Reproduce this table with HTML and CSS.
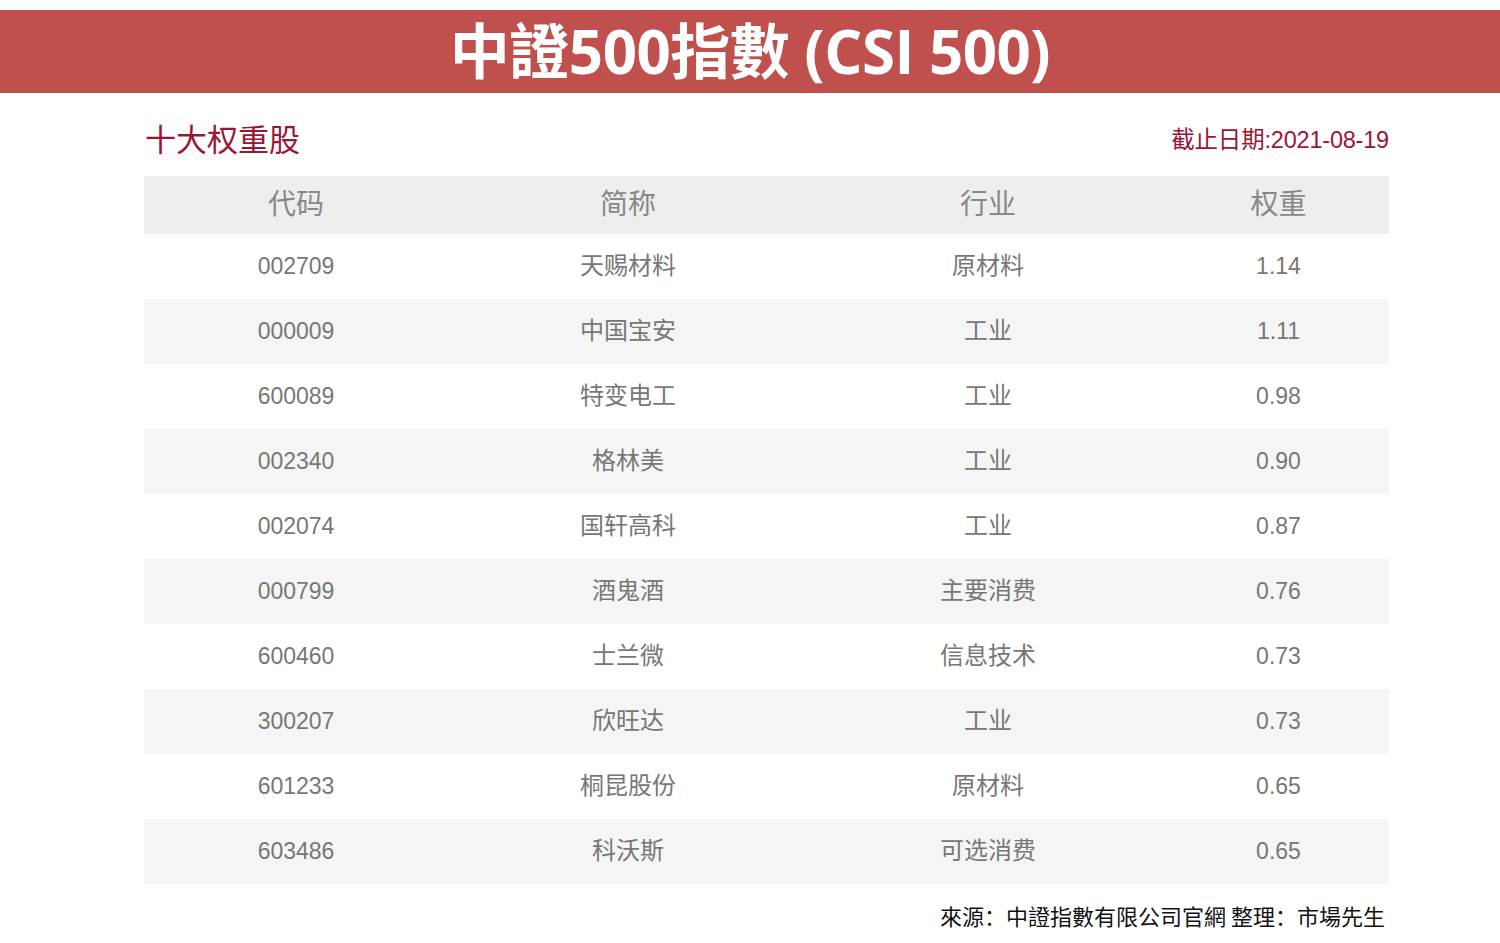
FILE: index.html
```html
<!DOCTYPE html>
<html lang="zh">
<head>
<meta charset="utf-8">
<title>中證500指數 (CSI 500)</title>
<link rel="stylesheet" href="styles.css">
</head>
<body>
<header class="banner"><h1 class="banner-title">中證500指數 (CSI 500)</h1></header>
<main class="content">
  <div class="section-head">
    <h2 class="section-title">十大权重股</h2>
    <div class="date">截止日期:2021-08-19</div>
  </div>
  <table class="holdings">
    <colgroup>
      <col class="c1"><col class="c2"><col class="c3"><col class="c4">
    </colgroup>
    <thead>
      <tr><th>代码</th><th>简称</th><th>行业</th><th>权重</th></tr>
    </thead>
    <tbody>
      <tr><td>002709</td><td>天赐材料</td><td>原材料</td><td>1.14</td></tr>
      <tr><td>000009</td><td>中国宝安</td><td>工业</td><td>1.11</td></tr>
      <tr><td>600089</td><td>特变电工</td><td>工业</td><td>0.98</td></tr>
      <tr><td>002340</td><td>格林美</td><td>工业</td><td>0.90</td></tr>
      <tr><td>002074</td><td>国轩高科</td><td>工业</td><td>0.87</td></tr>
      <tr><td>000799</td><td>酒鬼酒</td><td>主要消费</td><td>0.76</td></tr>
      <tr><td>600460</td><td>士兰微</td><td>信息技术</td><td>0.73</td></tr>
      <tr><td>300207</td><td>欣旺达</td><td>工业</td><td>0.73</td></tr>
      <tr><td>601233</td><td>桐昆股份</td><td>原材料</td><td>0.65</td></tr>
      <tr><td>603486</td><td>科沃斯</td><td>可选消费</td><td>0.65</td></tr>
    </tbody>
  </table>
  <p class="source">來源：中證指數有限公司官網 整理：市場先生</p>
</main>
</body>
</html>
```
FILE: styles.css
```css
* { box-sizing: border-box; }
html, body { margin: 0; padding: 0; background: #fff; }
body {
  padding-top: 10px;
  font-family: "Liberation Sans", "Noto Sans CJK SC", sans-serif;
}
.banner {
  background: #c0504d;
  height: 83px;
  display: flex;
  align-items: center;
  justify-content: center;
}
.banner-title {
  margin: 0 0 2px 0;
  color: #fff;
  font-family: "Open Sans", "Noto Sans CJK TC", sans-serif;
  font-weight: 700;
  font-size: 60px;
  line-height: 1;
  letter-spacing: -0.5px;
}
.content {
  width: 1245px;
  margin-left: 144px;
}
.section-head {
  height: 83px;
  padding-top: 12px;
  display: flex;
  align-items: center;
  justify-content: space-between;
}
.section-title {
  margin: 0 0 6px 1px;
  font-weight: 400;
  font-size: 31px;
  color: #9b1535;
  font-family: "Noto Sans CJK SC", sans-serif;
  line-height: 1;
}
.date {
  font-size: 23.5px;
  color: #9b1535;
  line-height: 1;
  letter-spacing: -0.2px;
}
.holdings {
  width: 1245px;
  border-collapse: collapse;
  table-layout: fixed;
}
.c1 { width: 304px; }
.c2 { width: 360px; }
.c3 { width: 360px; }
.c4 { width: 221px; }
.holdings th {
  background: #eeeeee;
  height: 58px;
  font-weight: 400;
  font-size: 28px;
  color: #888;
  font-family: "Noto Sans CJK SC", sans-serif;
  text-align: center;
  padding: 0 0 6px 0;
}
.holdings td {
  height: 65px;
  font-size: 23px;
  color: #777;
  text-align: center;
  padding: 0;
}
.holdings td:nth-child(2),
.holdings td:nth-child(3) {
  font-size: 24px;
  padding-bottom: 7px;
}
.holdings tbody tr:nth-child(even) td { background: #f5f5f5; }
.source {
  margin: 14px 4px 0 0;
  text-align: right;
  font-size: 22px;
  line-height: 34px;
  color: #111;
  font-family: "Noto Sans CJK TC", sans-serif;
}
```
